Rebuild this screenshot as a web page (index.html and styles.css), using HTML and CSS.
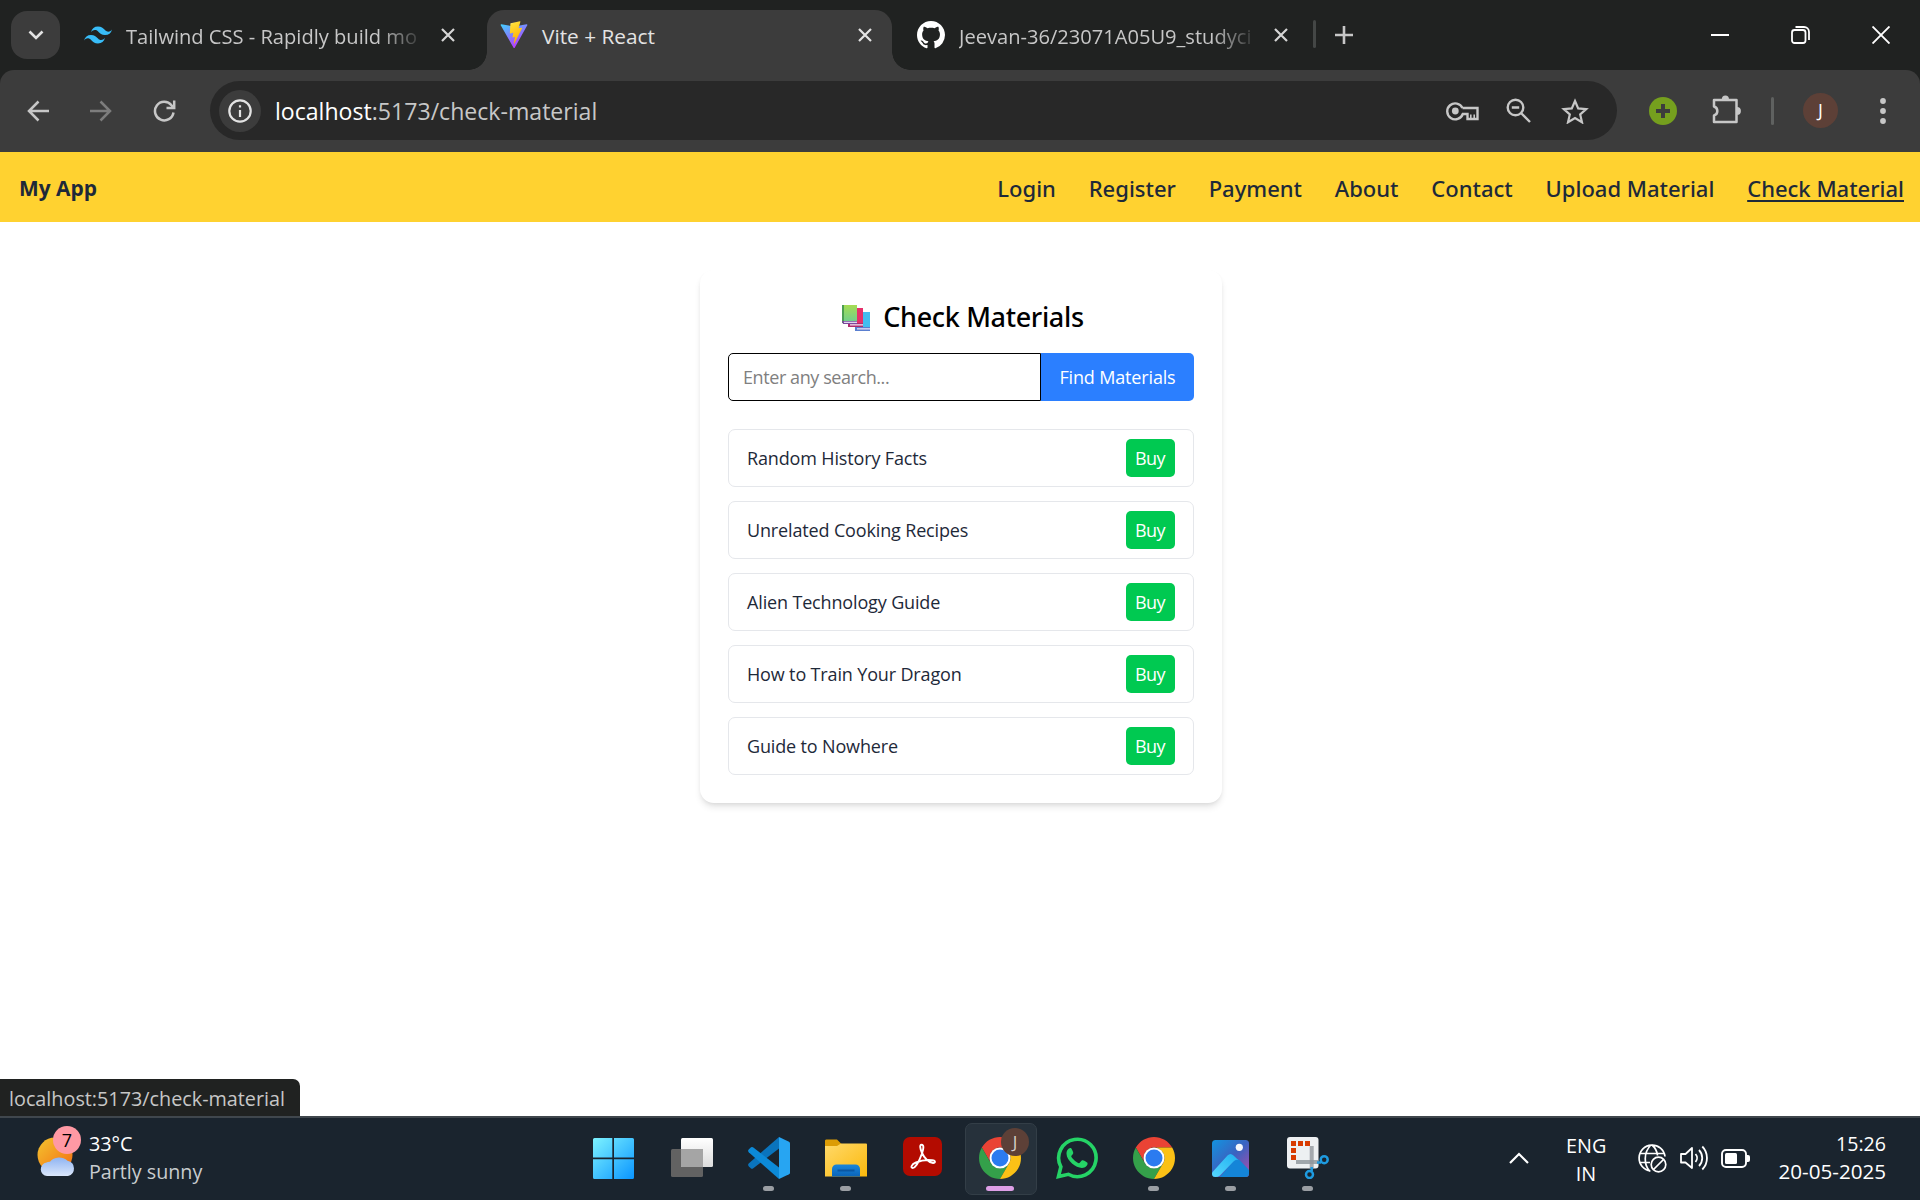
FILE: index.html
```html
<!DOCTYPE html>
<html lang="en">
<head>
<meta charset="utf-8">
<title>Vite + React</title>
<link rel="stylesheet" href="styles.css">
</head>
<body>
<svg class="defs" width="0" height="0">
  <defs>
    <linearGradient id="viteA" x1="0" y1="0" x2=".6" y2="1"><stop offset="0" stop-color="#41d1ff"/><stop offset="1" stop-color="#bd34fe"/></linearGradient>
    <linearGradient id="viteB" x1=".3" y1="0" x2=".6" y2="1"><stop offset="0" stop-color="#ffea83"/><stop offset=".1" stop-color="#ffdd35"/><stop offset="1" stop-color="#ffa800"/></linearGradient>
    <linearGradient id="win" gradientUnits="userSpaceOnUse" x1="0" y1="0" x2="41" y2="41"><stop offset="0" stop-color="#7df3ff"/><stop offset="1" stop-color="#0a95ff"/></linearGradient>
    <linearGradient id="sun" x1="0" y1="0" x2="1" y2="1"><stop offset="0" stop-color="#f3c52f"/><stop offset="1" stop-color="#f36b12"/></linearGradient>
    <linearGradient id="cloud" x1="0" y1="0" x2="0" y2="1"><stop offset="0" stop-color="#8fb4f2"/><stop offset="1" stop-color="#dbe7fb"/></linearGradient>
    <linearGradient id="fold" x1="0" y1="0" x2="1" y2="1"><stop offset="0" stop-color="#ffd96a"/><stop offset="1" stop-color="#fbb90c"/></linearGradient>
    <linearGradient id="foldBlue" x1="0" y1="0" x2="0" y2="1"><stop offset="0" stop-color="#1a86da"/><stop offset="1" stop-color="#0a64b8"/></linearGradient>
    <linearGradient id="photo" x1="0" y1="0" x2="1" y2="1"><stop offset="0" stop-color="#1294e0"/><stop offset=".5" stop-color="#3a62c0"/><stop offset="1" stop-color="#b04cae"/></linearGradient>
    <linearGradient id="mount" x1="0" y1="1" x2="1" y2="0"><stop offset="0" stop-color="#55d8ff"/><stop offset="1" stop-color="#20b0f0"/></linearGradient>
    <linearGradient id="white" x1="0" y1="0" x2="0" y2="1"><stop offset="0" stop-color="#ffffff"/><stop offset="1" stop-color="#dcdcdc"/></linearGradient>
    <linearGradient id="bookG" x1="0" y1="0" x2="0" y2="1"><stop offset="0" stop-color="#a5dc52"/><stop offset="1" stop-color="#72d08a"/></linearGradient>
    <symbol id="chrome" viewBox="0 0 48 48">
      <path fill="#ea4335" d="M3.22 12A24 24 0 0 1 44.78 12H24A12 12 0 0 0 13.61 30Z"/>
      <path fill="#34a04a" d="M3.22 12A24 24 0 0 0 24 48L34.39 30A12 12 0 0 1 13.61 30Z"/>
      <path fill="#fbc116" d="M44.78 12A24 24 0 0 1 24 48L34.39 30A12 12 0 0 0 24 12Z"/>
      <circle cx="24" cy="24" r="12" fill="#fff"/><circle cx="24" cy="24" r="9.7" fill="#2b7bf0"/>
    </symbol>
    <symbol id="x" viewBox="0 0 16 16"><path d="M2 2 14 14M14 2 2 14" fill="none" stroke="currentColor" stroke-width="2.2"/></symbol>
  </defs>
</svg>

<div class="screen">
  <header class="tabs">
    <button class="tab-search"><svg width="16" height="10" viewBox="0 0 16 10"><path d="M1.5 1.5 8 8l6.5-6.5" fill="none" stroke="#e3e3e3" stroke-width="2.6"/></svg></button>
    <div class="tab tab-first">
      <svg class="fav" viewBox="0 0 24 24"><path fill="#38bdf8" d="M12.001 4.8c-3.2 0-5.2 1.6-6 4.8 1.2-1.6 2.6-2.2 4.2-1.8.913.228 1.565.89 2.288 1.624C13.666 10.618 15.027 12 18.001 12c3.2 0 5.2-1.6 6-4.8-1.2 1.6-2.6 2.2-4.2 1.8-.913-.228-1.565-.89-2.288-1.624C16.337 6.182 14.976 4.8 12.001 4.8zm-6 7.2c-3.2 0-5.2 1.6-6 4.8 1.2-1.6 2.6-2.2 4.2-1.8.913.228 1.565.89 2.288 1.624 1.177 1.194 2.538 2.576 5.512 2.576 3.2 0 5.2-1.6 6-4.8-1.2 1.6-2.6 2.2-4.2 1.8-.913-.228-1.565-.89-2.288-1.624C10.337 13.382 8.976 12 6.001 12z"/></svg>
      <span class="tab-title fade">Tailwind CSS - Rapidly build mo</span>
      <svg class="tab-x"><use href="#x"/></svg>
    </div>
    <div class="tab tab-active">
      <svg class="fav" viewBox="0 0 410 404"><path fill="url(#viteA)" d="M399.641 59.5246L215.643 388.545C211.844 395.338 202.084 395.378 198.228 388.618L10.5817 59.5563C6.38087 52.1896 12.6802 43.2665 21.0281 44.7586L205.223 77.6824C206.398 77.8924 207.601 77.8904 208.776 77.6763L389.119 44.8058C397.439 43.2894 403.768 52.1434 399.641 59.5246Z"/><path fill="url(#viteB)" d="M292.965 1.5744L156.801 28.2552C154.563 28.6937 152.906 30.5903 152.771 32.8664L144.395 174.33C144.198 177.662 147.258 180.248 150.51 179.498L188.42 170.749C191.967 169.931 195.172 173.055 194.443 176.622L183.18 231.775C182.422 235.487 185.907 238.661 189.532 237.56L212.947 230.446C216.577 229.344 220.065 232.527 219.297 236.242L201.398 322.875C200.278 328.294 207.486 331.249 210.492 326.603L212.5 323.5L323.454 102.072C325.312 98.3645 322.108 94.137 318.036 94.9228L279.014 102.454C275.347 103.161 272.227 99.746 273.262 96.1583L298.731 7.86689C299.767 4.27314 296.636 0.855181 292.965 1.5744Z"/></svg>
      <span class="tab-title">Vite + React</span>
      <svg class="tab-x"><use href="#x"/></svg>
    </div>
    <div class="tab tab-last">
      <svg class="fav" viewBox="0 0 16 16"><path fill="#fff" d="M8 0C3.58 0 0 3.58 0 8c0 3.54 2.29 6.53 5.47 7.59.4.07.55-.17.55-.38 0-.19-.01-.82-.01-1.49-2.01.37-2.53-.49-2.69-.94-.09-.23-.48-.94-.82-1.13-.28-.15-.68-.52-.01-.53.63-.01 1.08.58 1.23.82.72 1.21 1.87.87 2.33.66.07-.52.28-.87.51-1.07-1.78-.2-3.64-.89-3.64-3.95 0-.87.31-1.59.82-2.15-.08-.2-.36-1.02.08-2.12 0 0 .67-.21 2.2.82.64-.18 1.32-.27 2-.27s1.36.09 2 .27c1.53-1.04 2.2-.82 2.2-.82.44 1.1.16 1.92.08 2.12.51.56.82 1.27.82 2.15 0 3.07-1.87 3.75-3.65 3.95.29.25.54.73.54 1.48 0 1.07-.01 1.93-.01 2.2 0 .21.15.46.55.38A8.01 8.01 0 0 0 16 8c0-4.42-3.58-8-8-8z"/></svg>
      <span class="tab-title fade">Jeevan-36/23071A05U9_studyci</span>
      <svg class="tab-x"><use href="#x"/></svg>
    </div>
    <span class="tab-sep"></span>
    <svg class="new-tab" width="18" height="18" viewBox="0 0 18 18"><path d="M9 0v18M0 9h18" stroke="#c7c7c7" stroke-width="2.6"/></svg>
    <div class="win-controls">
      <svg width="18" height="18" viewBox="0 0 18 18"><path d="M0 9h18" stroke="#fff" stroke-width="2"/></svg>
      <svg width="19" height="18" viewBox="0 0 19 18" fill="none" stroke="#fff" stroke-width="1.8"><rect x="1" y="4" width="13.5" height="13" rx="2.5"/><path d="M4.5 1h8.5a5 5 0 0 1 5 5v8"/></svg>
      <svg width="18" height="18" viewBox="0 0 18 18"><path d="M.5.5l17 17M17.5.5l-17 17" stroke="#fff" stroke-width="1.9"/></svg>
    </div>
  </header>

  <div class="toolbar-wrap">
    <div class="toolbar">
      <div class="nav-icons">
        <svg width="22" height="22" viewBox="0 0 22 22"><path d="M22 11H2M11.5 1.5 2 11l9.5 9.5" fill="none" stroke="#c7c7c7" stroke-width="2.5"/></svg>
        <svg width="22" height="22" viewBox="0 0 22 22"><path d="M0 11h20M10.5 1.5 20 11l-9.5 9.5" fill="none" stroke="#7d7d7d" stroke-width="2.5"/></svg>
        <svg width="23" height="22" viewBox="0 0 23 22"><path d="M20.5 12.5A9.3 9.3 0 1 1 18.5 5.2L20.5 7.5M21.2 .5V8H13.5" fill="none" stroke="#c7c7c7" stroke-width="2.5"/></svg>
      </div>
      <div class="omnibox">
        <span class="info"><svg width="24" height="24" viewBox="0 0 24 24"><circle cx="12" cy="12" r="10.7" fill="none" stroke="#e3e3e3" stroke-width="2.2"/><path d="M12 11v7M12 6.2v2.4" stroke="#e3e3e3" stroke-width="2.2"/></svg></span>
        <span class="url"><b>localhost</b>:5173/check-material</span>
        <div class="omni-icons">
          <svg width="33" height="20" viewBox="0 0 33 20" fill="none" stroke="#c7c7c7" stroke-width="2.4"><path d="M16.5 7H31.5V18H21.5V13H16.8A8 8 0 1 1 16.5 7"/><path d="M24.8 17.5V13.5M28.2 17.5V13.5" stroke-width="1.6"/><circle cx="9.3" cy="10" r="3.4" fill="#c7c7c7" stroke="none"/></svg>
          <svg width="25" height="25" viewBox="0 0 25 25" fill="none" stroke="#c7c7c7" stroke-width="2.4"><circle cx="9.5" cy="9.5" r="7.8"/><path d="M15 15l9 9M5.8 9.5h7.4"/></svg>
          <svg width="28" height="26" viewBox="0 0 28 26" fill="none" stroke="#c7c7c7" stroke-width="2.2"><path d="M14 3l3.2 7.4 8 .7-6 5.3 1.8 7.9L14 20.1l-7 4.2 1.8-7.9-6-5.3 8-.7z"/></svg>
        </div>
      </div>
      <svg class="ext" width="28" height="28" viewBox="0 0 28 28"><circle cx="14" cy="14" r="14" fill="#759f1e"/><path d="M14 7v14M7 14h14" stroke="#3c3c3c" stroke-width="4"/></svg>
      <svg class="puzzle" width="29" height="29" viewBox="0 0 29 29"><path fill="none" stroke="#c7c7c7" stroke-width="2.5" stroke-linejoin="round" d="M2 5H24.5V27H2V20.5A4.7 4.7 0 0 0 2 11.5Z"/><path fill="#c7c7c7" d="M9.8 4.5a3.6 4 0 0 1 7.2 0zM25 12a3.8 3.8 0 0 1 0 7.8z"/></svg>
      <span class="bar-sep"></span>
      <span class="avatar">J</span>
      <svg class="dots" width="6" height="26" viewBox="0 0 6 26" fill="#c7c7c7"><circle cx="3" cy="3" r="2.9"/><circle cx="3" cy="13" r="2.9"/><circle cx="3" cy="23" r="2.9"/></svg>
    </div>
  </div>

  <nav class="site-nav">
    <a class="brand">My App</a>
    <div class="links"><a>Login</a><a>Register</a><a>Payment</a><a>About</a><a>Contact</a><a>Upload Material</a><a class="hover">Check Material</a></div>
  </nav>

  <main class="page">
    <section class="card">
      <h1><svg width="28" height="28" viewBox="0 0 28 28">
        <path fill="#42bdf0" d="M14 8h14v15H14z"/><path fill="#5a7fd0" d="M13 23h15v4H13z"/><path fill="#e8dff5" d="M15 24.2h13v1.3H15z"/>
        <path fill="#e5306a" d="M7 4h14v15H7z"/><path fill="#b02c6e" d="M6 19h15v4H6z"/><path fill="#f0dcf0" d="M8 20.2h13v1.3H8z"/>
        <path fill="url(#bookG)" d="M0 1h15v16H0z"/><path fill="#4c9e52" d="M0 1h2v18H0z"/><path fill="#7b4a9c" d="M0 17h15v3H1z"/><path fill="#e0d4f0" d="M2 17.7h13v1.3H2z"/></svg><span>Check Materials</span></h1>
      <form class="search"><input type="text" placeholder="Enter any search..."><button type="button">Find Materials</button></form>
      <ul>
        <li><span>Random History Facts</span><button>Buy</button></li>
        <li><span>Unrelated Cooking Recipes</span><button>Buy</button></li>
        <li><span>Alien Technology Guide</span><button>Buy</button></li>
        <li><span>How to Train Your Dragon</span><button>Buy</button></li>
        <li><span>Guide to Nowhere</span><button>Buy</button></li>
      </ul>
    </section>
    <div class="status">localhost:5173/check-material</div>
  </main>

  <footer class="taskbar">
    <div class="weather">
      <div class="w-icon">
        <svg width="44" height="44" viewBox="0 0 44 44"><circle cx="20" cy="22" r="17.5" fill="url(#sun)"/><path fill="url(#cloud)" d="M12 43a6.8 6.8 0 0 1-.5-13.5 6 6 0 0 1 3.5-.7 11 9.5 0 0 1 17.5-1A8 7.8 0 0 1 33 43z"/></svg>
        <span class="w-badge">7</span>
      </div>
      <div class="w-text"><div class="temp">33°C</div><div class="cond">Partly sunny</div></div>
    </div>
    <div class="apps">
      <span class="app start"><svg width="41" height="41" viewBox="0 0 41 41" fill="url(#win)"><path d="M1.5 0H19.3V19.5H0V1.5A1.5 1.5 0 0 1 1.5 0ZM21 0H39.5A1.5 1.5 0 0 1 41 1.5V19.5H21ZM0 21.2H19.3V41H1.5A1.5 1.5 0 0 1 0 39.5ZM21 21.2H41V39.5A1.5 1.5 0 0 1 39.5 41H21Z"/></svg></span>
      <span class="app"><svg width="42" height="40" viewBox="0 0 42 40"><rect x="0" y="11" width="32" height="28" rx="1.5" fill="#626262"/><rect x="10" y="0" width="32" height="29" rx="1.5" fill="url(#white)"/><path fill="#a5a5a5" d="M10 11h22v18H11.5A1.5 1.5 0 0 1 10 27.5z"/></svg></span>
      <span class="app run"><svg width="42" height="42" viewBox="0 0 42 42"><path fill="#0a74bd" d="M31 0V11.5L5 31.5A2 2 0 0 1 3 31.5L.7 29.2A2 2 0 0 1 .7 26.5Z"/><path fill="#0c8ad8" d="M31 42V30.5L5 10.2A2 2 0 0 0 3 10.2L.7 12.5A2 2 0 0 0 .7 15.2Z"/><path fill="#27a5f2" d="M31 0L41 4.7A1.8 1.8 0 0 1 42 6.3V35.7A1.8 1.8 0 0 1 41 37.3L31 42Z"/></svg></span>
      <span class="app run"><svg width="42" height="38" viewBox="0 0 42 38"><path fill="#dc9c05" d="M0 1.5A1.5 1.5 0 0 1 1.5.5H12L16.5 5V12H0Z"/><path fill="url(#fold)" d="M0 7H12L16 4.5H41A1 1 0 0 1 42 5.5V37.5H0Z"/><path fill="url(#foldBlue)" d="M7 37.5V30A4.5 4.5 0 0 1 11.5 25.5H30.5A4.5 4.5 0 0 1 35 30V37.5Z"/><path d="M12.5 31.5H29.5" stroke="#0a57a2" stroke-width="2"/></svg></span>
      <span class="app"><svg class="acro" width="39" height="39" viewBox="0 0 39 39"><rect width="39" height="39" rx="7" fill="#b30b00"/><path fill="none" stroke="#fff" stroke-width="1.9" stroke-linejoin="round" d="M18.5 7.7C21.3 7.7 20.5 12 19 16.5 16.5 23.5 12.5 31 9.7 31 7.5 31 8 27.5 13 25.5 18.5 23.2 25 22.7 29 23.2 33.3 23.7 32.3 26.2 30 26 25.5 25.5 21 20.5 19 16 17 11.5 16.5 7.7 18.5 7.7Z"/></svg></span>
      <span class="app run current"><svg width="42" height="42"><use href="#chrome"/></svg><span class="app-badge">J</span></span>
      <span class="app"><svg width="42" height="42" viewBox="0 0 42 42"><path fill="none" stroke="#25d366" stroke-width="3.6" d="M2.5 39.5 4.9 29.8A18.7 18.7 0 1 1 12.3 37.3Z"/><path fill="#25d366" d="M14.8 11C13.5 10.6 10.3 12.7 10.5 16.8 10.8 24 20 31 26 30.9 29.5 30.8 32 28.5 31.5 26 31.2 24.8 27 23 26.2 23.2 25.2 23.6 24 26 23 26.2 21 26 15.8 21.5 15.2 19.3 15.5 18.3 17.3 17 17.3 15.9 17.2 15 15.7 11.3 14.8 11Z"/></svg></span>
      <span class="app run"><svg width="42" height="42"><use href="#chrome"/></svg></span>
      <span class="app run"><svg width="37" height="37" viewBox="0 0 37 37"><rect width="37" height="37" rx="3.5" fill="url(#photo)"/><path fill="#1485d8" d="M8 37 22 20.5Q25 17.5 28 20.5L37 30V33.5A3.5 3.5 0 0 1 33.5 37Z"/><path fill="url(#mount)" d="M1 31.5 15.5 15.5Q18.5 12.5 21.5 15.5L26.5 20.3Q24 19 21.5 21.5L8 35.5Q6 37 3.5 37A3.5 3.5 0 0 1 0 33.5Q0 32.5 1 31.5Z"/><circle cx="27.3" cy="7.3" r="3.6" fill="#f4f6fb"/></svg></span>
      <span class="app run"><svg width="42" height="42" viewBox="0 0 42 42"><rect width="31.5" height="31.5" rx="3" fill="#edf0f2"/><path fill="#d83b01" d="M4 4h5v5H4zM11 4h5v5h-5zM18 4h5v5h-5zM4 11h5v5H4zM4 18h5v5H4z"/><path d="M24.7 9V31" stroke="#a4a9ae" stroke-width="4"/><path d="M9 25H31" stroke="#8e959b" stroke-width="4" opacity=".8"/><g fill="none" stroke="#1e9be0" stroke-width="2.5"><circle cx="37.2" cy="22.7" r="3.5"/><circle cx="22.5" cy="37.5" r="3.5"/><path d="M30 25.5H34M24.7 30V34"/></g></svg></span>
    </div>
    <div class="tray">
      <svg class="chev" width="20" height="12" viewBox="0 0 20 12"><path d="M1 11 10 2l9 9" fill="none" stroke="#fff" stroke-width="2.2"/></svg>
      <div class="lang"><div>ENG</div><div>IN</div></div>
      <div class="sys">
        <svg width="29" height="29" viewBox="0 0 29 29" fill="none" stroke="#fff" stroke-width="1.7"><path d="M12.5 27A13 13 0 1 1 27 12.5M1.5 9.5H26.5M1.5 18.5H12M12 27.5C5.5 21 5.5 8 13 1M14 1C18 4.5 19.2 8 19.5 11.5"/><circle cx="20.5" cy="20.5" r="7.3"/><path d="M15.5 25.5l10-10"/></svg>
        <svg width="28" height="26" viewBox="0 0 28 26" fill="none" stroke="#fff" stroke-width="1.8" stroke-linejoin="round"><path d="M1 9V17.5H5.5L12 23V3L5.5 9Z"/><path d="M15.5 9a6 6 0 0 1 0 8M19 5a11.5 11.5 0 0 1 0 16M22.3 1.5a16.5 16.5 0 0 1 0 23"/></svg>
        <svg width="29" height="19" viewBox="0 0 29 19"><rect x="1" y="1" width="24" height="17" rx="4" fill="none" stroke="#fff" stroke-width="1.9"/><rect x="4" y="4" width="12" height="11" rx="1.5" fill="#fff"/><path fill="#fff" d="M25.5 6h1.5a2 2 0 0 1 2 2v3a2 2 0 0 1-2 2h-1.5z"/></svg>
      </div>
      <div class="clock"><div class="time">15:26</div><div class="date">20-05-2025</div></div>
    </div>
  </footer>
</div>
</body>
</html>
```
FILE: styles.css
```css
* { box-sizing: border-box; }
body { margin: 0; font-family: "Open Sans", "Noto Sans", sans-serif; background: #fff; }
svg { display: block; flex: none; }
.defs { position: absolute; }
button, input { font: inherit; border: 0; margin: 0; padding: 0; }
.screen { width: 1920px; height: 1200px; display: flex; flex-direction: column; overflow: hidden; }

/* tab strip */
.tabs { height: 70px; background: #202221; display: flex; padding: 10px 0 0 11px; }
.tab-search { width: 49px; height: 48px; margin-top: 1px; border-radius: 16px; background: #3c3c3c; display: flex; align-items: center; justify-content: center; }
.tab { height: 60px; display: flex; align-items: center; padding-bottom: 10px; }
.fav { width: 28px; height: 28px; }
.tab-title { width: 294px; margin-left: 14px; font-size: 20.1px; line-height: 30px; white-space: nowrap; color: #c7c7c7; padding-top: 3px; }
.fade { -webkit-mask-image: linear-gradient(90deg, #000 86%, transparent 102%); mask-image: linear-gradient(90deg, #000 86%, transparent 102%); }
.tab-x { width: 16px; height: 16px; margin-left: 20px; color: #d5d5d5; }
.tab-first { width: 427px; padding-left: 24px; }
.tab-active { position: relative; width: 405px; padding-left: 13px; background: #3c3c3c; border-radius: 17px 17px 0 0; }
.tab-active .tab-title { width: 301px; font-size: 20.8px; color: #e3e3e3; padding-top: 2px; }
.tab-active .tab-x { margin-left: 14px; color: #e3e3e3; }
.tab-active::before, .tab-active::after { content: ""; position: absolute; bottom: 0; width: 18px; height: 18px; }
.tab-active::before { right: 100%; background: radial-gradient(circle at 0 0, transparent 17.5px, #3c3c3c 18px); }
.tab-active::after { left: 100%; background: radial-gradient(circle at 100% 0, transparent 17.5px, #3c3c3c 18px); }
.tab-last { width: 398px; padding-left: 25px; }
.tab-sep { width: 3px; height: 28px; margin: 10px 0 0 23px; border-radius: 2px; background: #444746; }
.new-tab { margin: 16px 0 0 19px; }
.win-controls { margin: 16px 30px 0 auto; display: flex; gap: 62px; }

/* toolbar */
.toolbar-wrap { background: #202221; }
.toolbar { height: 82px; background: #3c3c3c; border-radius: 14px 14px 0 0; display: flex; align-items: center; padding-bottom: 1px; }
.nav-icons { display: flex; gap: 41px; width: 210px; padding-left: 27px; }
.omnibox { width: 1407px; height: 59px; border-radius: 30px; background: #282828; display: flex; align-items: center; padding-left: 9px; }
.info { width: 42px; height: 42px; border-radius: 50%; background: #3c3c3c; display: flex; align-items: center; justify-content: center; }
.url { margin-left: 14px; font-size: 23.1px; line-height: 34px; color: #c7c7c7; }
.url b { font-weight: 400; color: #fff; }
.omni-icons { margin: 0 28px 0 auto; display: flex; align-items: center; gap: 27px; }
.omni-icons svg:last-child { margin-left: 3px; }
.ext { margin-left: 32px; }
.puzzle { margin: 0 0 2px 35px; }
.bar-sep { width: 3px; height: 28px; margin-left: 30px; border-radius: 2px; background: #5f6160; }
.avatar { width: 35px; height: 35px; margin-left: 29px; border-radius: 50%; background: #5d4037; color: #fff; font-size: 18px; line-height: 35px; text-align: center; }
.dots { margin-left: 42px; }

/* site navigation */
.site-nav { height: 70px; background: #ffd230; color: #1e2939; display: flex; justify-content: space-between; align-items: center; padding: 2px 16px 0 19px; }
.brand { font-size: 20.9px; font-weight: 700; }
.links { display: flex; gap: 32.8px; font-family: "Noto Sans", "Open Sans", sans-serif; font-size: 22px; font-weight: 500; line-height: 34px; padding-bottom: 1px; }
.hover { text-decoration: underline; text-decoration-thickness: 2px; text-underline-offset: 3px; }

/* page */
.page { position: relative; height: 894px; padding-top: 48px; background: #fff; }
.card { width: 522px; height: 533px; margin: 0 0 0 700px; padding: 28px; border-radius: 14px; background: #fff; box-shadow: 0 5px 7px -1px rgba(0,0,0,.1), 0 2px 5px -2px rgba(0,0,0,.1); }
h1 { margin: 0; height: 36px; display: flex; align-items: center; justify-content: center; gap: 13px; font-family: "Noto Sans", "Open Sans", sans-serif; font-size: 27px; line-height: 36px; font-weight: 500; letter-spacing: -.35px; color: #000; padding: 2px 0 0 4px; }
h1 svg { margin-top: 2px; }
.search { display: flex; height: 48px; margin: 19px 0 28px; font-size: 18px; }
.search input { width: 313px; border: 1px solid #000; border-radius: 5px 0 0 5px; padding: 0 14px; outline: 0; letter-spacing: -.42px; background: #fff; }
.search input::placeholder { color: #808080; opacity: 1; }
.search button { width: 153px; background: #2b7fff; color: #fff; border-radius: 0 5px 5px 0; letter-spacing: -.16px; }
ul { list-style: none; margin: 0; padding: 0; display: grid; gap: 14px; }
li { height: 58px; border: 1px solid #e5e7eb; border-radius: 7px; padding: 0 18px; display: flex; align-items: center; justify-content: space-between; font-size: 18px; letter-spacing: -.15px; color: #1e2939; }
li button { width: 49px; height: 38px; border-radius: 5px; background: #00c951; color: #fff; letter-spacing: -.5px; padding-right: 1px; }
.status { position: absolute; left: 0; bottom: 0; width: 300px; height: 37px; padding-left: 9px; background: #202221; border-top-right-radius: 7px; color: #c7c7c7; font-size: 19.8px; line-height: 39px; }

/* taskbar */
.taskbar { height: 84px; border-top: 2px solid #40474d; background: #1a242e; color: #fff; display: flex; font-size: 19.8px; line-height: 28px; }
.weather { width: 576px; display: flex; padding: 12px 0 0 35px; }
.w-icon { position: relative; width: 54px; padding-top: 3px; }
.w-badge { position: absolute; left: 18px; top: -4px; width: 28px; height: 28px; border-radius: 50%; background: #ff99a4; color: #000; font-size: 18px; line-height: 28px; text-align: center; }
.cond { color: #c8cccf; font-size: 19.7px; }
.apps { display: flex; height: 82px; padding-top: 5px; }
.app { position: relative; width: 77px; height: 70px; display: flex; align-items: center; justify-content: center; }
.start { padding-right: 3px; }
.acro { margin-bottom: 3px; }
.run::after { content: ""; position: absolute; left: 33px; bottom: 2px; width: 11px; height: 5px; border-radius: 3px; background: #9a9ea3; }
.current::before { content: ""; position: absolute; left: 4px; top: 0; width: 70px; height: 70px; border-radius: 7px; background: #26313b; border: 1px solid #333e47; }
.current svg { position: relative; }
.current::after { left: 25px; width: 28px; background: #dd9fe6; }
.app-badge { position: absolute; left: 40px; top: 5px; width: 28px; height: 28px; border-radius: 50%; background: #5d4037; color: #d8cfcc; font-size: 17px; line-height: 28px; text-align: center; }
.tray { flex: 1; display: flex; padding: 0 34px 0 0; justify-content: flex-end; }
.chev { margin: 34px 37px 0 0; }
.lang { width: 40px; padding-top: 14px; line-height: 27.5px; text-align: center; }
.sys { display: flex; align-items: center; height: 80px; gap: 13px; margin-left: 32px; }
.clock { width: 136px; padding-top: 12px; line-height: 27.5px; text-align: right; }
.time { font-size: 19.6px; }
.date { font-size: 20.6px; }
```
